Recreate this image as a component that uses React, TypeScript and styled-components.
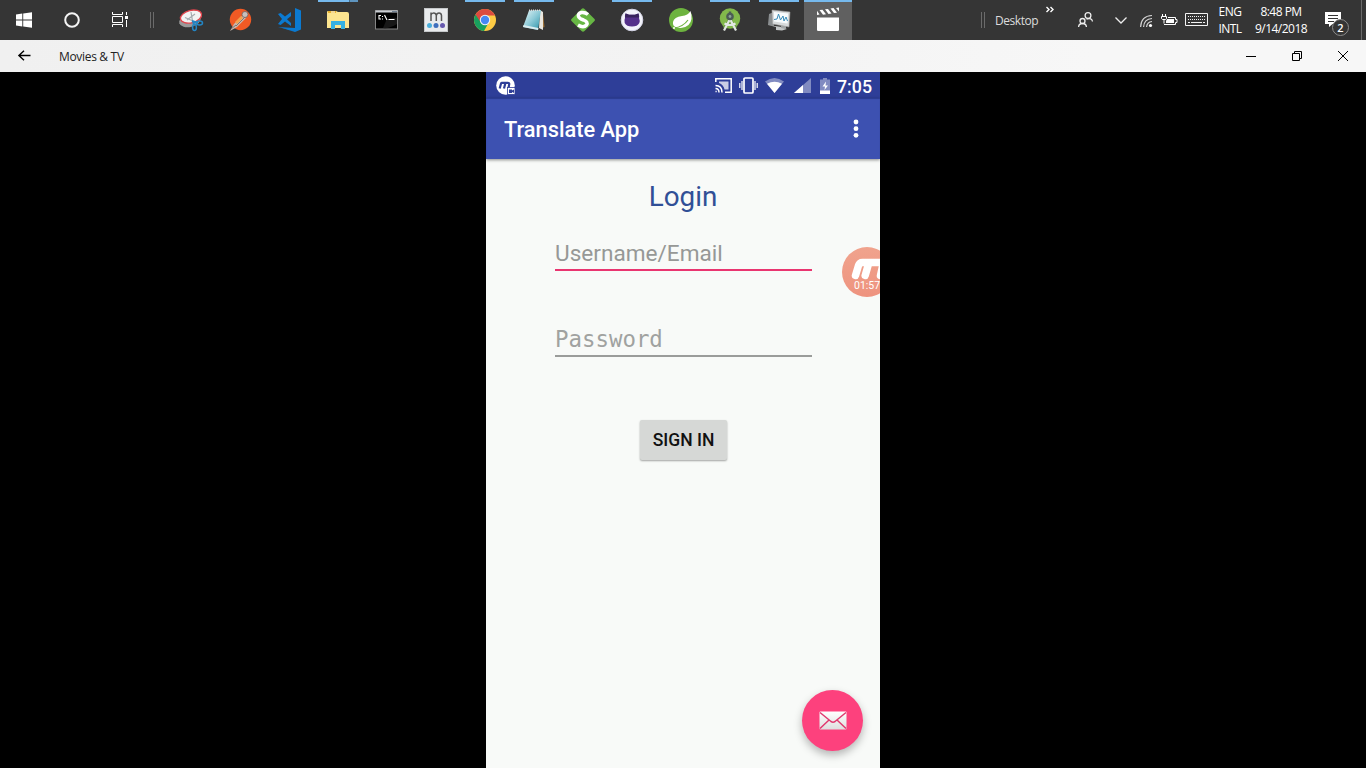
import React from "react";
import styled, { createGlobalStyle } from "styled-components";

const Global = createGlobalStyle`
  * { box-sizing: border-box; }
  html, body { margin: 0; background: #000; }
  svg { display: block; overflow: visible; flex: none; }
`;

const UI = `"Open Sans", "Noto Sans", sans-serif`;

const Desktop = styled.div`
  width: 1366px;
  height: 768px;
  display: flex;
  flex-direction: column;
  background: #000;
  overflow: hidden;
`;

const Taskbar = styled.header`
  height: 40px;
  display: flex;
  align-items: stretch;
  background: #353535;
  color: #fff;
  font-family: ${UI};
  flex: none;
`;

const SystemButton = styled.div`
  width: 48px;
  display: grid;
  place-items: center;
`;

const Grip = styled.div<{ $ml?: number }>`
  width: 4px;
  height: 16px;
  margin-left: ${(p) => p.$ml ?? 0}px;
  align-self: center;
  border: solid #6b6b6b;
  border-width: 0 1px;
`;

const Apps = styled.nav`
  display: flex;
  gap: 1px;
  margin-left: 13px;
`;

const AppSlot = styled.div<{ $active?: boolean }>`
  width: 48px;
  display: flex;
  flex-direction: column;
  align-items: center;
  gap: 6px;
  background: ${(p) => (p.$active ? "#606060" : "transparent")};
`;

type State = "none" | "running" | "stacked" | "active";

const barFill: Record<State, string> = {
  none: "transparent",
  running: "#76b9ed",
  stacked: "linear-gradient(90deg, #76b9ed 31px, #47708f 31px, #47708f 32px, #5e94be 32px)",
  active: "#76b9ed",
};

const RunningBar = styled.div<{ $state: State }>`
  width: ${(p) => (p.$state === "active" ? 48 : 40)}px;
  height: 2px;
  background: ${(p) => barFill[p.$state]};
`;

const Tray = styled.div`
  display: flex;
  align-items: stretch;
  margin-left: auto;
`;

const TrayLabel = styled.span`
  width: 43px;
  margin-left: 10px;
  font-size: 12px;
  line-height: 41px;
  letter-spacing: -0.45px;
  white-space: nowrap;
  color: #dcdcdc;
`;

const TrayItem = styled.div<{ $w: number; $ml: number }>`
  width: ${(p) => p.$w}px;
  margin-left: ${(p) => p.$ml}px;
`;

const TrayText = styled.div<{ $w: number; $ml: number }>`
  width: ${(p) => p.$w}px;
  margin-left: ${(p) => p.$ml}px;
  padding-top: 3px;
  display: flex;
  flex-direction: column;
  align-items: center;
  font-size: 12px;
  line-height: 17px;
  letter-spacing: -0.52px;
  white-space: nowrap;
`;

const ShowDesktop = styled.div`
  width: 5px;
  margin-left: 11px;
  border-left: 1px solid #6a6a6a;
`;

const TitleBar = styled.div`
  height: 32px;
  display: flex;
  align-items: center;
  background: linear-gradient(90deg, #f0f0f0, #f3f3f3 50%, #f7f7f7 80%);
  color: #222;
  font-family: ${UI};
  flex: none;
`;

const BackButton = styled.div`
  width: 31px;
  margin-left: 18px;
`;

const WindowTitle = styled.span`
  margin-left: 10px;
  padding-top: 2px;
  font-size: 12px;
  letter-spacing: -0.32px;
  line-height: 30px;
`;

const WindowControls = styled.div`
  display: flex;
  margin-left: auto;
`;

const WindowControl = styled.div`
  width: 46px;
  height: 32px;
  display: grid;
  place-items: center;
`;

const Stage = styled.main`
  flex: 1;
  display: flex;
  justify-content: center;
  background: #000;
`;

const Phone = styled.section`
  position: relative;
  width: 394px;
  overflow: hidden;
  display: flex;
  flex-direction: column;
  background: #f8faf8;
  font-family: Roboto, sans-serif;
`;

const StatusBar = styled.div`
  height: 26px;
  display: flex;
  align-items: center;
  padding: 1px 7px 0 10px;
  background: #2e3e98;
  color: #fff;
  flex: none;
`;

const StatusIcons = styled.div`
  display: flex;
  align-items: center;
  margin-left: auto;
`;

const Clock = styled.span`
  width: 36px;
  margin-left: 7px;
  padding-top: 1px;
  font-size: 17.8px;
  font-weight: 500;
  line-height: 25px;
  white-space: nowrap;
`;

const AppBar = styled.div`
  height: 61px;
  display: flex;
  align-items: center;
  justify-content: space-between;
  padding: 1px 21px 0 18px;
  background: #3d51b1;
  color: #fff;
  box-shadow: inset 0 1px 1px #2a3a8e, 0 1px 3px rgba(0, 0, 0, 0.45);
  flex: none;
`;

const AppTitle = styled.h1`
  margin: 0;
  padding-top: 2px;
  font-size: 21.8px;
  font-weight: 500;
  line-height: 30px;
`;

const LoginForm = styled.form`
  display: flex;
  flex-direction: column;
  align-items: center;
  padding-top: 19px;
`;

const Heading = styled.h2`
  margin: 0;
  font-size: 27.8px;
  font-weight: 400;
  line-height: 38px;
  color: #304f96;
`;

const Field = styled.div<{ $focused?: boolean; $mono?: boolean; $mt: number }>`
  width: 257px;
  height: 36px;
  margin-top: ${(p) => p.$mt}px;
  margin-left: 1px;
  border-bottom: 2px solid ${(p) => (p.$focused ? "#e93570" : "#9a9c9a")};
  font-family: ${(p) => (p.$mono ? `"DejaVu Sans Mono", monospace` : "Roboto, sans-serif")};
  font-size: ${(p) => (p.$mono ? 22.4 : 22.6)}px;
  line-height: 37px;
  color: ${(p) => (p.$mono ? "#a0a2a0" : "#969896")};
  white-space: nowrap;
`;

const SignIn = styled.button`
  width: 87px;
  height: 40px;
  margin: 63px 0 0 1px;
  padding: 0;
  border: 0;
  border-radius: 2px;
  background: #d6d8d6;
  box-shadow: 0 1px 2px rgba(0, 0, 0, 0.35);
  font: 500 17.5px/41px Roboto, sans-serif;
  color: #111;
`;

const RecorderBubble = styled.div`
  position: absolute;
  left: 356px;
  top: 175px;
  width: 50px;
  height: 50px;
  border-radius: 50%;
  background: linear-gradient(#f0a38d, #ee937f);
  color: #fff;
  padding: 12px 0 0 9px;
`;

const RecorderTime = styled.div`
  margin-left: 3px;
  font-size: 10.5px;
  line-height: 11px;
`;

const Fab = styled.div`
  position: absolute;
  right: 17px;
  bottom: 17px;
  width: 61px;
  height: 61px;
  border-radius: 50%;
  display: grid;
  place-items: center;
  background: #fd417d;
  box-shadow: 0 4px 8px rgba(0, 0, 0, 0.28);
`;

const StatusGlyph = styled.svg<{ $ml: number }>`
  margin-left: ${(p) => p.$ml}px;
`;

const Icon = ({ children }: { children: React.ReactNode }) => (
  <svg width="24" height="24" viewBox="0 0 24 24">{children}</svg>
);

const Snip = () => (
  <Icon>
    <ellipse cx="11" cy="12.5" rx="11" ry="6.5" transform="rotate(-14 11 12.5)" fill="#999" />
    <ellipse cx="12" cy="8.6" rx="10.8" ry="6.2" transform="rotate(-14 12 8.6)" fill="#f3f3f3" stroke="#e0454d" strokeWidth="1.3" />
    <path d="M6 9.5 14 13M12 4l1.500 9M8 12l8-6" stroke="#a4acb0" strokeWidth="1.2" fill="none" />
    <path d="m13 13 6 2M14 13l1 4" stroke="#2385c4" strokeWidth="2" />
    <ellipse cx="20.5" cy="15" rx="3" ry="2" fill="none" stroke="#2385c4" strokeWidth="1.5" />
    <ellipse cx="15.5" cy="19.5" rx="1.9" ry="3" fill="none" stroke="#2385c4" strokeWidth="1.5" />
  </Icon>
);

const Postman = () => (
  <Icon>
    <circle cx="12.5" cy="11.5" r="10.7" fill="#f15a24" />
    <path d="m2 23 4-7 9-9 3 3-9 9Z" fill="#c9b9b0" />
    <path d="m7 14 6-6 2 2-6 6Z" fill="#f5a04c" />
    <path d="m3 21 5-4M8 18l9-9" stroke="#6d5f5a" strokeWidth=".8" />
    <circle cx="17" cy="6.5" r="3" fill="#c8c0bc" stroke="#74615a" strokeWidth=".8" />
  </Icon>
);

const Code = () => (
  <Icon>
    <path d="m18 0 6 2.5v19L18 24 5 20l13 1Z" fill="#0b7ad1" />
    <path
      d="m1 6 2.600-1 4.400 3.500L14 4v14l-6-4.500L3.600 17 1 16l4-5Zm13 2-4 3.300 4 3.700Z"
      fill="#0b7ad1"
      fillRule="evenodd"
    />
    <path d="m1 19 17 1v3Z" fill="#0b7ad1" />
  </Icon>
);

const Explorer = () => (
  <Icon>
    <path d="M1 4q0-1 1-1h8l2 1h9q2 0 2 2v14H1Z" fill="#fde590" />
    <path d="M2 3h8v2H2Z" fill="#e7b02c" />
    <path d="M5 4h4" stroke="#fff" />
    <path d="M5 21v-8h14v8h-4v-4H9v4Z" fill="#35b1e4" />
  </Icon>
);

const Terminal = () => (
  <Icon>
    <rect x=".5" y="2.5" width="22" height="18.5" fill="#000" stroke="#858585" />
    <path d="M.5 3.500h22" stroke="#c9cdd2" strokeWidth="2" />
    <path d="M17 3.500h5" stroke="#6f7f91" />
    <path d="M11 13q5-4 11-3v6q-8 5-14 4Z" fill="#181818" />
    <path d="M6 7.5H4v3.5h2M7.500 8v1M7.500 10.5v1M9.500 7l2.500 5M13.500 11.5h6" stroke="#fff" strokeWidth="1.100" fill="none" />
  </Icon>
);

const MTile = () => (
  <Icon>
    <rect x=".5" y=".5" width="23" height="23" fill="#e9ebed" stroke="#c5c8ca" />
    <path d="M7 13V4.5M7 7q.5-2 2.700-2T12.300 7.500V13M12.300 7.500q.5-2.500 2.700-2.500t2.500 2.500V13" stroke="#555" strokeWidth="1.500" fill="none" />
    <circle cx="5.500" cy="17.500" r="2.500" fill="#4aaedb" />
    <circle cx="12" cy="17.500" r="2.500" fill="#3f6fbd" />
    <circle cx="18.500" cy="17.500" r="2.500" fill="#6558ae" />
  </Icon>
);

const Chrome = () => (
  <Icon>
    <circle cx="12" cy="12" r="11" fill="#fdcb44" />
    <path d="M12 12 2.500 6.500A11 11 0 0 0 11 23l5-9Z" fill="#18a05e" />
    <path d="M2.500 6.500A11 11 0 0 1 21.500 6.500L22 7.500H12L7.500 14Z" fill="#dc4b40" />
    <circle cx="12" cy="12" r="5.200" fill="#f2f4f7" />
    <circle cx="12" cy="12" r="4.200" fill="#4688f4" />
  </Icon>
);

const Notepad = () => (
  <Icon>
    <defs>
      <linearGradient id="pad" x1="0" x2="1" y1="0" y2="1">
        <stop offset="0" stopColor="#eaf6f8" />
        <stop offset=".5" stopColor="#8ecbd8" />
        <stop offset="1" stopColor="#2791a8" />
      </linearGradient>
    </defs>
    <path d="m21 5 1.500 14-2.500 1Z" fill="#9c713a" />
    <path d="m18 2 3 2v18l-4-2Z" fill="#e9e6df" />
    <path d="M7 2.500 19 2l-3 20-15-3Z" fill="url(#pad)" />
    <path d="m1 19 15 3 .5-2-15-3Z" fill="#d9ecef" />
    <path d="M7 2.300h12" stroke="#ddd" strokeWidth="1.500" strokeDasharray="1 1" />
  </Icon>
);

const SDiamond = () => (
  <Icon>
    <path d="M10.500 1q1.500-1.500 3 0l10 10q1 1 0 2l-10 10q-1.500 1.500-3 0L.5 13q-1-1 0-2Z" fill="#67b744" />
    <path d="M17 6.500q-3-2.500-6.500-2-4 1-3 4 .6 2 5 3.500 5 2 3 5-3 3.500-8.500 0" stroke="#fff" strokeWidth="3.500" fill="none" />
  </Icon>
);

const GitHub = () => (
  <Icon>
    <circle cx="12" cy="12" r="10.800" fill="#f3f3fa" stroke="#d3d4e5" />
    <path d="M5 10q-.4-3 .5-4.500 2 .3 3.500 1.200h6q2-1 3.500-1.200 1 2 .5 4.500 1.200 2.500.3 5Q17.500 18.500 12 18.500T4.700 15Q4 12 5 10Z" fill="#54308a" />
    <path d="M5.500 5.500Q7 6 9 6.700h6q2-.8 3.500-1.200l.6 4H5Z" fill="#38235d" />
  </Icon>
);

const Spring = () => (
  <Icon>
    <circle cx="12" cy="12" r="12" fill="#6db33f" />
    <path d="M21.500 3q3 9-2 14-5 4.500-13 2Q3.500 18 4 14q1-5 9-6 6-.5 8.500-5Z" fill="#fff" />
    <path d="M5 20q9-1 14-8" stroke="#6db33f" strokeWidth="1.200" fill="none" />
    <circle cx="5" cy="20" r="1" fill="#fff" />
  </Icon>
);

const AndroidStudio = () => (
  <Icon>
    <circle cx="12" cy="10.500" r="10.200" fill="#82b94b" />
    <path d="m12 9 7 10-2 2-5-5-5 5-2-2Z" fill="#6f9f48" />
    <path d="M12 11 6 22.500M12 11l6 11.500M6.500 15.500q5.500 3 11 0" stroke="#e2e8e2" strokeWidth="2.200" fill="none" />
    <circle cx="12" cy="8.500" r="3.800" fill="#4c5c55" />
    <circle cx="12" cy="8.500" r="1.400" fill="#8ca39a" />
    <path d="M12 3.500V6" stroke="#4c5c55" strokeWidth="2.500" />
  </Icon>
);

const Monitor = () => (
  <Icon>
    <path d="m2 6 5-2v14l-6-1Z" fill="#8b8f91" />
    <path d="m1 17 14 2 5 2-5 1.500L9 22v-3Z" fill="#c4c7c8" />
    <path d="m14 17 5 1v3l-5-1Z" fill="#a0a4a5" />
    <path d="m5 2 18 2-1 15L5.500 16Z" fill="#d7dadb" stroke="#999" strokeWidth=".6" />
    <path d="m7 4 14 1.500-.5 10L7 13.500Z" fill="#f7fbfd" />
    <path d="M7 11.500 10 11l1.500-5 2 6 2.500-4 1 5 2-4 1.500 4" fill="none" stroke="#378bb8" />
  </Icon>
);

const Clapper = () => (
  <Icon>
    <path d="M1 9.500h22v12q0 1.500-1 1.500H2q-1 0-1-1.500Z" fill="#fff" />
    <path d="M1 2.800 3.500 6.500 1 7Zm2.500-.7 3-.4 3.500 4.500-3 .5Zm5.500-.8 3-.4 3.500 4.500-3 .5Zm5.500-.8 3-.4L21 4.700l-3 .4ZM20 0l3-.4v4Z" fill="#fff" />
  </Icon>
);

const apps: { id: string; icon: React.ComponentType; state: State }[] = [
  { id: "snip", icon: Snip, state: "none" },
  { id: "postman", icon: Postman, state: "none" },
  { id: "code", icon: Code, state: "none" },
  { id: "explorer", icon: Explorer, state: "stacked" },
  { id: "terminal", icon: Terminal, state: "none" },
  { id: "m", icon: MTile, state: "none" },
  { id: "chrome", icon: Chrome, state: "running" },
  { id: "notepad", icon: Notepad, state: "running" },
  { id: "s", icon: SDiamond, state: "none" },
  { id: "github", icon: GitHub, state: "running" },
  { id: "spring", icon: Spring, state: "none" },
  { id: "studio", icon: AndroidStudio, state: "running" },
  { id: "monitor", icon: Monitor, state: "running" },
  { id: "movies", icon: Clapper, state: "active" },
];

const RecorderMark = () => (
  <svg width="35" height="21" viewBox="0 0 35 21">
    <path
      d="M4.500 16.500 7.500 6.500q1-3 4-3h17q4 0 3 4l-2 9M17.500 5l-3.300 11.500"
      fill="none"
      stroke="#fff"
      strokeWidth="7.500"
      strokeLinecap="round"
      strokeLinejoin="round"
    />
  </svg>
);

const RecorderBadge = () => (
  <svg width="19" height="19" viewBox="0 0 19 19">
    <circle cx="9.500" cy="9.500" r="9.300" fill="#fff" />
    <path d="m3.700 12.500 1.600-6M5.300 6.800h6.500q1.700 0 1.400 1.500L12.500 12M9.500 6.500 8 12.500" fill="none" stroke="#2e3e98" strokeWidth="2.200" />
    <rect x="11.500" y="11.500" width="7.500" height="7" fill="#fff" stroke="#2e3e98" strokeWidth=".8" />
    <path d="M13 13.500h3v1l2-1v3.500l-2-1v1h-3Z" fill="#2e3e98" />
  </svg>
);

const CastIcon = () => (
  <StatusGlyph $ml={0} width="17" height="15" viewBox="0 0 17 15" fill="none" stroke="#fff" strokeWidth="1.500">
    <path d="M.8 4V.8h15.400v13.400H10M.5 13.500h1.200M.5 10.500q3.500 0 3.500 4M.5 7.500q6.500 0 6.500 7" />
    <path d="M4 3.500h9.500v8H9.500q-1-5-5.500-6.500Z" fill="#fff" stroke="none" opacity=".75" />
  </StatusGlyph>
);

const VibrateIcon = () => (
  <StatusGlyph $ml={7} width="19" height="17" viewBox="0 0 19 17" fill="none" stroke="#fff">
    <rect x="5" y="1" width="9" height="15" rx="1" strokeWidth="1.700" />
    <path d="M.8 6v5M3 4v9M18.200 6v5M16 4v9" strokeWidth="1.200" />
  </StatusGlyph>
);

const WifiIcon = () => (
  <StatusGlyph $ml={7} width="19" height="15" viewBox="0 0 19 15">
    <path d="M0 3.500Q9.500-3.500 19 3.500L9.500 15Z" fill="#fff" opacity=".4" />
    <path d="M2 5.800Q9.500 1.500 17 5.800L9.500 15Z" fill="#fff" />
  </StatusGlyph>
);

const SignalIcon = () => (
  <StatusGlyph $ml={10} width="17" height="15" viewBox="0 0 17 15">
    <path d="M17 0v15H0Z" fill="#fff" opacity=".4" />
    <path d="M9 7v8H0Z" fill="#fff" />
  </StatusGlyph>
);

const BatteryIcon = () => (
  <StatusGlyph $ml={9} width="10" height="16" viewBox="0 0 10 16">
    <path d="M3 0h4v1.500h3V16H0V1.500h3Z" fill="#fff" opacity=".4" />
    <path d="M0 12.500h10V16H0Z" fill="#fff" />
    <path d="M6 3.500 2.500 8.500H5L4.500 12 8 7.500H5.500Z" fill="#fff" />
  </StatusGlyph>
);

export default function App() {
  return (
    <Desktop>
      <Global />
      <Taskbar>
        <SystemButton>
          <svg width="16" height="16" viewBox="0 0 16 16">
            <path d="m0 2.500 6.300-.9v5.900H0ZM7.200 1.400 16 .2v7.300H7.200ZM0 8.400h6.300v6L0 13.500Zm7.200 0H16v7.400l-8.800-1.200Z" fill="#fff" />
          </svg>
        </SystemButton>
        <SystemButton>
          <svg width="16" height="16" viewBox="0 0 16 16">
            <circle cx="8" cy="8" r="6.800" fill="none" stroke="#f4f4f4" strokeWidth="2" />
          </svg>
        </SystemButton>
        <SystemButton>
          <svg width="16" height="16" viewBox="0 0 16 16">
            <path d="M.5 0v2.500h10V0M.5 15v-2.500h10V15M.5 4.500h10v6H.500ZM14.500 0v3M14.500 8v7" fill="none" stroke="#fff" />
            <path d="M13 4h3v3h-3Z" fill="#fff" />
          </svg>
        </SystemButton>
        <Grip $ml={6} />
        <Apps>
          {apps.map(({ id, icon: Glyph, state }) => (
            <AppSlot key={id} $active={state === "active"}>
              <RunningBar $state={state} />
              <Glyph />
            </AppSlot>
          ))}
        </Apps>
        <Tray>
          <Grip />
          <TrayLabel>Desktop</TrayLabel>
          <TrayItem $w={9} $ml={8}>
            <svg width="9" height="40" viewBox="0 0 9 40">
              <path d="m.5 7 2.500 2.500L.5 12m4-5L7 9.500 4.500 12" fill="none" stroke="#fff" strokeWidth="1.400" />
            </svg>
          </TrayItem>
          <TrayItem $w={15} $ml={23}>
            <svg width="15" height="40" viewBox="0 0 15 40" fill="none" stroke="#eee" strokeWidth="1.300">
              <circle cx="10" cy="15.500" r="2.900" />
              <circle cx="4.500" cy="21" r="2.500" />
              <path d="M.6 27q.2-3.500 3.900-3.500T8.400 27M8.500 19q5.500-1.500 6 2.500" />
            </svg>
          </TrayItem>
          <TrayItem $w={12} $ml={22}>
            <svg width="12" height="40" viewBox="0 0 12 40">
              <path d="m.5 17.500 5.500 5.500 5.500-5.500" fill="none" stroke="#eee" strokeWidth="1.300" />
            </svg>
          </TrayItem>
          <TrayItem $w={13} $ml={13}>
            <svg width="13" height="40" viewBox="0 0 13 40" fill="none" stroke="#d5d5d5" strokeWidth="1.200">
              <path d="M.6 27Q1 16 12 15.500M3.600 27q.4-8 8.400-8.500M6.600 27q.4-5 5.400-5.500" />
              <circle cx="10.500" cy="25.500" r="1.600" fill="#fff" stroke="none" />
            </svg>
          </TrayItem>
          <TrayItem $w={17} $ml={8}>
            <svg width="17" height="40" viewBox="0 0 17 40" fill="none" stroke="#fff">
              <path d="M1.500 14v2M4.500 14v2M.5 16.500h5v2l-1 1h-3l-1-1ZM3 19.500v4M3 24.500h11.500v-2h1.500v-3h-1.500v-2H7" />
              <path d="M6 19h7v4H5v-2Z" fill="#fff" stroke="none" />
            </svg>
          </TrayItem>
          <TrayItem $w={23} $ml={7}>
            <svg width="23" height="40" viewBox="0 0 23 40" fill="none" stroke="#f3f3f3">
              <path d="M.5 13.500h22v12H.500Z" />
              <path d="M3 16.500h17M3 19.500h17" strokeDasharray="1 1" />
              <path d="M3 22.500h2M6 22.500h11M18 22.500h2" />
            </svg>
          </TrayItem>
          <TrayText $w={30} $ml={7}>
            <span>ENG</span>
            <span>INTL</span>
          </TrayText>
          <TrayText $w={60} $ml={6}>
            <span>8:48 PM</span>
            <span>9/14/2018</span>
          </TrayText>
          <TrayItem $w={25} $ml={14}>
            <svg width="25" height="40" viewBox="0 0 25 40">
              <path d="M0 12h16v12H7.500L4 27v-3H0Z" fill="#fff" />
              <path d="M3 15.500h10M3 18.500h10M3 21.500h6" stroke="#353535" />
              <circle cx="15.500" cy="27.500" r="8" fill="#353535" stroke="#8b8b8b" />
              <text x="15.500" y="31.500" textAnchor="middle" fontSize="11" fontWeight="600" fill="#fff">2</text>
            </svg>
          </TrayItem>
          <ShowDesktop />
        </Tray>
      </Taskbar>

      <TitleBar>
        <BackButton>
          <svg width="13" height="12" viewBox="0 0 13 12">
            <path d="M6 .8.900 5.500 6 10.200M1 5.500h11.500" fill="none" stroke="#000" strokeWidth="1.400" />
          </svg>
        </BackButton>
        <WindowTitle>Movies &amp; TV</WindowTitle>
        <WindowControls>
          <WindowControl>
            <svg width="10" height="10" viewBox="0 0 10 10"><path d="M0 5.500h10" stroke="#000" /></svg>
          </WindowControl>
          <WindowControl>
            <svg width="10" height="10" viewBox="0 0 10 10"><path d="M.5 2.500h7v7h-7ZM2.500 2.500v-2h7v7h-2" fill="none" stroke="#000" /></svg>
          </WindowControl>
          <WindowControl>
            <svg width="10" height="10" viewBox="0 0 10 10"><path d="m0 0 10 10M10 0 0 10" stroke="#000" /></svg>
          </WindowControl>
        </WindowControls>
      </TitleBar>

      <Stage>
        <Phone>
          <StatusBar>
            <RecorderBadge />
            <StatusIcons>
              <CastIcon />
              <VibrateIcon />
              <WifiIcon />
              <SignalIcon />
              <BatteryIcon />
              <Clock>7:05</Clock>
            </StatusIcons>
          </StatusBar>
          <AppBar>
            <AppTitle>Translate App</AppTitle>
            <svg width="6" height="20" viewBox="0 0 6 20" fill="#fff">
              <circle cx="3" cy="3" r="2.400" />
              <circle cx="3" cy="9.700" r="2.400" />
              <circle cx="3" cy="16.300" r="2.400" />
            </svg>
          </AppBar>
          <LoginForm>
            <Heading>Login</Heading>
            <Field $focused $mt={19}>Username/Email</Field>
            <Field $mono $mt={50}>Password</Field>
            <SignIn type="button">SIGN IN</SignIn>
          </LoginForm>
          <RecorderBubble>
            <RecorderMark />
            <RecorderTime>01:57</RecorderTime>
          </RecorderBubble>
          <Fab>
            <svg width="28" height="19" viewBox="0 0 28 19">
              <defs>
                <linearGradient id="mail" x1="0" x2="0" y1="0" y2="1">
                  <stop offset="0" stopColor="#fff" />
                  <stop offset="1" stopColor="#dedede" />
                </linearGradient>
              </defs>
              <rect x=".5" y=".5" width="27" height="18" rx="1" fill="url(#mail)" />
              <path d="m1 1.500 11 9q2 1.300 4 0l11-9M1 17.500l9-8.500M27 17.500 18 9" fill="none" stroke="#e0396f" strokeWidth="1.500" />
            </svg>
          </Fab>
        </Phone>
      </Stage>
    </Desktop>
  );
}
